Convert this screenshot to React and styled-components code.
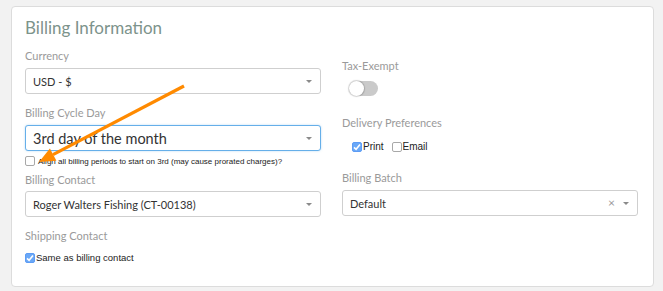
import styled, { createGlobalStyle } from "styled-components";

const GlobalStyle = createGlobalStyle`
  html, body {
    margin: 0;
    padding: 0;
    background: #f2f2f2;
  }
  body {
    font-family: Lato, "Open Sans", sans-serif;
  }
`;

const Page = styled.div`
  position: relative;
  width: 663px;
  height: 291px;
  padding: 6px 0 0 11px;
  box-sizing: border-box;
`;

const Card = styled.section`
  width: 643px;
  height: 281px;
  box-sizing: border-box;
  background: #fff;
  border: 1px solid #dcdcdc;
  border-radius: 4px;
  padding: 9px 15px 0 13px;
`;

const Title = styled.h2`
  margin: 0 0 8px;
  font-size: 17px;
  line-height: 24px;
  font-weight: 400;
  color: #7d938b;
`;

const Columns = styled.div`
  display: grid;
  grid-template-columns: 296px 296px;
  column-gap: 21px;
  align-items: start;
`;

const Column = styled.div`
  display: flex;
  flex-direction: column;
  padding-top: ${(p) => p.$offset || 0}px;
`;

const Field = styled.div`
  display: flex;
  flex-direction: column;
  margin-bottom: ${(p) => p.$gap || 0}px;
`;

const Label = styled.div`
  font-size: 11px;
  line-height: 16px;
  color: #9a9a9a;
  margin-bottom: ${(p) => p.$gap ?? 4}px;
`;

const SelectBox = styled.div`
  display: flex;
  align-items: center;
  height: 26px;
  box-sizing: border-box;
  border: 1px solid ${(p) => (p.$focus ? "#66afe9" : "#cfcfcf")};
  box-shadow: ${(p) => (p.$focus ? "0 0 2px rgba(102,175,233,0.5)" : "none")};
  border-radius: 3px;
  padding: 0 8px 0 7px;
  font-size: ${(p) => p.$size || 11}px;
  color: #333;
  background: #fff;
`;

const SelectText = styled.span`
  flex: 1;
  white-space: nowrap;
`;

const Clear = styled.span`
  font-size: 12px;
  color: #9a9a9a;
  margin-right: 8px;
  line-height: 1;
`;

const Caret = styled.span`
  width: 0;
  height: 0;
  border-left: 3px solid transparent;
  border-right: 3px solid transparent;
  border-top: 3px solid #8a8a8a;
`;

const CheckRow = styled.label`
  display: flex;
  align-items: center;
  gap: ${(p) => p.$gap ?? 2}px;
  font-family: "Liberation Sans", Arial, sans-serif;
  font-size: ${(p) => p.$size || 10}px;
  color: #222;
  margin: ${(p) => p.$margin || "0"};
`;

const Box = styled.span`
  width: 10px;
  height: 10px;
  box-sizing: border-box;
  border-radius: 2px;
  border: 1px solid ${(p) => (p.$checked ? "#5d9cf5" : "#a8a8a8")};
  background: ${(p) => (p.$checked ? "#6aa8f7" : "#fff")};
  display: flex;
  align-items: center;
  justify-content: center;
`;

const ChecksLine = styled.div`
  display: flex;
  gap: 8px;
  padding-left: 10px;
  margin-top: ${(p) => p.$top || 0}px;
`;

const Toggle = styled.div`
  position: relative;
  width: 29px;
  height: 15px;
  border-radius: 8px;
  background: #cacaca;
  margin: 7px 0 0 7px;
`;

const Knob = styled.span`
  position: absolute;
  left: 0;
  top: 0;
  width: 15px;
  height: 15px;
  border-radius: 50%;
  background: #fff;
  box-shadow: 0 0 1px 1px rgba(0, 0, 0, 0.18);
`;

const Overlay = styled.svg`
  position: absolute;
  left: 0;
  top: 0;
  pointer-events: none;
`;

function Select({ value, focus, size, clearable }) {
  return (
    <SelectBox $focus={focus} $size={size}>
      <SelectText>{value}</SelectText>
      {clearable && <Clear>×</Clear>}
      <Caret />
    </SelectBox>
  );
}

function Check({ checked, children, size, gap, margin }) {
  return (
    <CheckRow $size={size} $gap={gap} $margin={margin}>
      <Box $checked={checked}>
        {checked && (
          <svg width="8" height="8" viewBox="0 0 8 8">
            <path d="M1 4.3 L3.1 6.3 L7 1.5" fill="none" stroke="#fff" strokeWidth="1.6" />
          </svg>
        )}
      </Box>
      {children}
    </CheckRow>
  );
}

export default function App() {
  return (
    <Page>
      <GlobalStyle />
      <Card>
        <Title>Billing Information</Title>
        <Columns>
          <Column>
            <Field $gap={11}>
              <Label>Currency</Label>
              <Select value="USD - $" />
            </Field>
            <Field $gap={6}>
              <Label>Billing Cycle Day</Label>
              <Select value="3rd day of the month" focus size={14.5} />
              <Check size={8} gap={3} margin="5px 0 0 0">
                Align all billing periods to start on 3rd (may cause prorated charges)?
              </Check>
            </Field>
            <Field $gap={11}>
              <Label $gap={3}>Billing Contact</Label>
              <Select value="Roger Walters Fishing (CT-00138)" />
            </Field>
            <Field>
              <Label $gap={8}>Shipping Contact</Label>
              <Check checked size={9.5} gap={1}>
                Same as billing contact
              </Check>
            </Field>
          </Column>
          <Column $offset={10}>
            <Field $gap={19}>
              <Label $gap={0}>Tax-Exempt</Label>
              <Toggle>
                <Knob />
              </Toggle>
            </Field>
            <Field $gap={18}>
              <Label $gap={0}>Delivery Preferences</Label>
              <ChecksLine $top={10}>
                <Check checked size={10} gap={1}>
                  Print
                </Check>
                <Check size={10} gap={1}>
                  Email
                </Check>
              </ChecksLine>
            </Field>
            <Field>
              <Label>Billing Batch</Label>
              <Select value="Default" clearable />
            </Field>
          </Column>
        </Columns>
      </Card>
      <Overlay width="663" height="291" viewBox="0 0 663 291">
        <line x1="184" y1="86" x2="53" y2="154.6" stroke="#ff8a00" strokeWidth="3.2" />
        <polygon points="39,162 56.4,160.8 49.9,148.4" fill="#ff8a00" />
      </Overlay>
    </Page>
  );
}
